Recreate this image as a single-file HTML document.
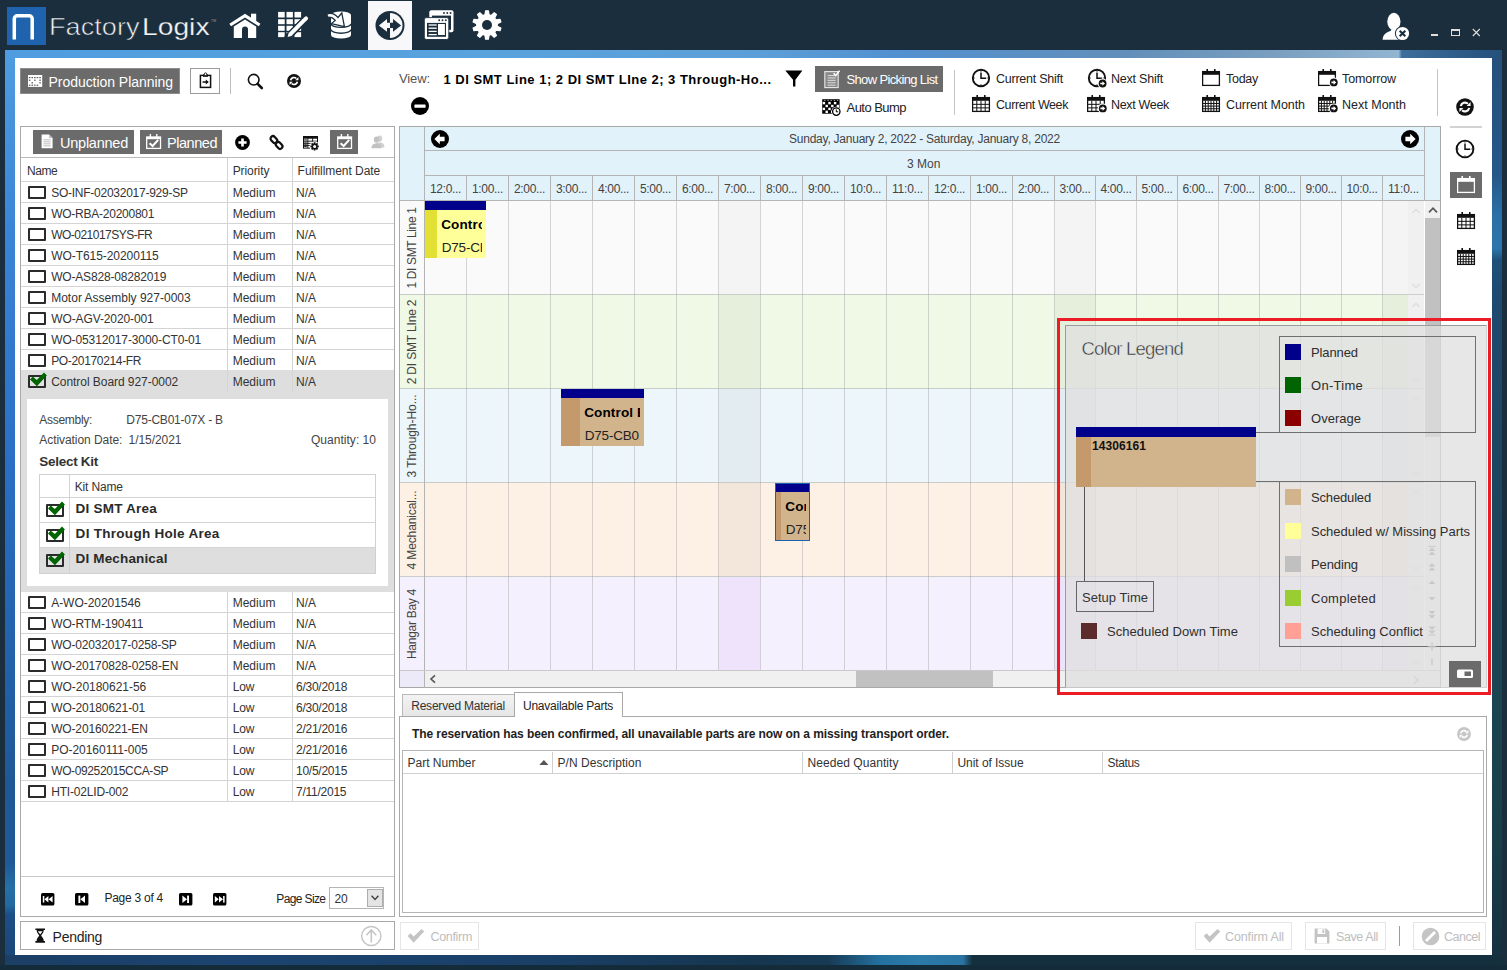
<!DOCTYPE html>
<html><head><meta charset="utf-8"><title>FactoryLogix</title>
<style>
html,body{margin:0;padding:0;}
body{width:1507px;height:970px;position:relative;overflow:hidden;background:#1b2e3d;font-family:"Liberation Sans",sans-serif;}
div,span,svg{position:absolute;}
span{white-space:nowrap;display:block;}
</style></head><body>
<div style="left:5px;top:50px;width:1497px;height:915px;background:linear-gradient(90deg,rgba(27,46,61,0) 0%,rgba(27,46,61,0) 55%,rgba(27,46,61,.0) 100%),linear-gradient(180deg,#4f9de0 0%,#3a84d6 20%,#2a6fc4 45%,#2160a6 70%,#1f5896 80%,#1f5a98 89%,#2670a8 91.5%,#2468a0 93.5%,#1c4e86 94.5%,#1b4676 100%);"></div>
<div style="left:5px;top:50px;width:1497px;height:8px;background:linear-gradient(90deg,#4f9de0 0%,#58a3de 30%,#5c9fd8 50%,#5290d0 60%,#628fba 75%,#7a9fc0 85%,#92b5d2 93.1%,#3e6e9c 93.3%,#24507a 100%);"></div>
<div style="left:1492px;top:58px;width:10px;height:907px;background:linear-gradient(180deg,#26507b 0%,#25588a 13%,#2a70a6 17.3%,#2b76ac 21%,#20507a 22.3%,#1e4a70 26%,#1c4560 45%,#1b4552 70%,#19404a 85%,#15303f 100%);"></div>
<div style="left:5px;top:955px;width:1497px;height:10px;background:linear-gradient(90deg,#1b3f66 0%,#1c4470 15%,#1a4068 35%,#16364f 50%,#173a55 55%,#2472a0 58.5%,#2b7aa8 61%,#2a74a2 64%,#14303f 64.6%,#14303f 100%);"></div>
<div style="left:0px;top:965px;width:1507px;height:5px;background:#142b39;"></div>
<div style="left:15px;top:58px;width:1477px;height:897px;background:#fff;"></div>
<div style="left:0px;top:0px;width:1507px;height:50px;background:#1b2e3d;"></div>
<div style="left:7px;top:7px;width:39px;height:38px;background:#1f62ad;"></div>
<svg style="left:7px;top:7px;" width="39" height="38" viewBox="0 0 39 38"><path d="M7.3 32.6 V11.8 a3 3 0 0 1 3 -3 H22.2 a3 3 0 0 1 3 3 V32.6" fill="none" stroke="#fff" stroke-width="3.5"/></svg>
<span style="left:49.2px;top:12.08px;font-size:24px;line-height:30px;color:#f0f2f4;transform-origin:0 0;transform:scaleX(1.1310);-webkit-text-stroke:0.6px #1b2e3d;">Factory</span>
<span style="left:142.4px;top:12.08px;font-size:24px;line-height:30px;color:#f4f5f6;transform-origin:0 0;transform:scaleX(1.1765);-webkit-text-stroke:0.25px #1b2e3d;">Logix</span>
<span style="left:211.00px;top:18.00px;font-size:3.5px;line-height:6px;letter-spacing:0.000px;color:#8d99a3;">TM</span>
<div style="left:20px;top:68px;width:160px;height:26px;background:#6b6b6b;border:1px solid #8c8c8c;box-sizing:border-box;"></div>
<span style="left:48.50px;top:73.00px;font-size:14px;line-height:18px;letter-spacing:-0.043px;color:#fff;">Production Planning</span>
<div style="left:190px;top:68px;width:30px;height:26px;background:#fff;border:1px solid #9a9a9a;box-sizing:border-box;"></div>
<div style="left:230px;top:68px;width:1px;height:26px;background:#bdbdbd;"></div>
<span style="left:399.00px;top:70.00px;font-size:13px;line-height:17px;letter-spacing:-0.111px;color:#555;">View:</span>
<span style="left:443.50px;top:71.00px;font-size:13px;line-height:17px;letter-spacing:0.488px;color:#000;font-weight:bold;">1 DI SMT Line 1; 2 DI SMT LIne 2; 3 Through-Ho...</span>
<div style="left:815px;top:66px;width:128px;height:26px;background:#6b6b6b;"></div>
<span style="left:846.50px;top:71.00px;font-size:13px;line-height:17px;letter-spacing:-0.640px;color:#fff;">Show Picking List</span>
<span style="left:846.50px;top:99.00px;font-size:13px;line-height:17px;letter-spacing:-0.535px;color:#222;">Auto Bump</span>
<div style="left:954px;top:70px;width:1px;height:45px;background:#c4c4c4;"></div>
<span style="left:996.00px;top:71.00px;font-size:12.5px;line-height:16px;letter-spacing:-0.244px;color:#222;">Current Shift</span>
<span style="left:996.00px;top:97.00px;font-size:12.5px;line-height:16px;letter-spacing:-0.407px;color:#222;">Current Week</span>
<span style="left:1111.00px;top:71.00px;font-size:12.5px;line-height:16px;letter-spacing:-0.219px;color:#222;">Next Shift</span>
<span style="left:1111.00px;top:97.00px;font-size:12.5px;line-height:16px;letter-spacing:-0.322px;color:#222;">Next Week</span>
<span style="left:1226.00px;top:71.00px;font-size:12.5px;line-height:16px;letter-spacing:-0.271px;color:#222;">Today</span>
<span style="left:1226.00px;top:97.00px;font-size:12.5px;line-height:16px;letter-spacing:-0.069px;color:#222;">Current Month</span>
<span style="left:1342.00px;top:71.00px;font-size:12.5px;line-height:16px;letter-spacing:-0.109px;color:#222;">Tomorrow</span>
<span style="left:1342.00px;top:97.00px;font-size:12.5px;line-height:16px;letter-spacing:0.008px;color:#222;">Next Month</span>
<div style="left:1437px;top:69px;width:1px;height:47px;background:#c4c4c4;"></div>
<div style="left:1450px;top:126px;width:32px;height:1.5px;background:#d2d2d2;"></div>
<div style="left:1450px;top:172px;width:32px;height:26px;background:#6b6b6b;"></div>
<div style="left:20px;top:126px;width:375px;height:791px;background:#fff;border:1px solid #a9a9a9;box-sizing:border-box;"></div>
<div style="left:33px;top:130px;width:101px;height:24px;background:#6b6b6b;"></div>
<span style="left:60.00px;top:134.00px;font-size:14.5px;line-height:18px;letter-spacing:-0.238px;color:#fff;">Unplanned</span>
<div style="left:139.5px;top:130px;width:82.5px;height:24px;background:#6b6b6b;"></div>
<span style="left:167.00px;top:134.00px;font-size:14.5px;line-height:18px;letter-spacing:-0.459px;color:#fff;">Planned</span>
<div style="left:330px;top:130px;width:28px;height:24px;background:#6b6b6b;"></div>
<div style="left:21px;top:157px;width:373px;height:1px;background:#bcbcbc;"></div>
<div style="left:21px;top:181px;width:373px;height:1px;background:#d4d4d4;"></div>
<span style="left:26.90px;top:163.00px;font-size:12px;line-height:16px;letter-spacing:-0.427px;color:#333;">Name</span>
<span style="left:232.70px;top:163.00px;font-size:12px;line-height:16px;letter-spacing:-0.080px;color:#333;">Priority</span>
<span style="left:297.60px;top:163.00px;font-size:12px;line-height:16px;letter-spacing:-0.048px;color:#333;">Fulfillment Date</span>
<div style="left:21px;top:202px;width:373px;height:1px;background:#d4d4d4;"></div>
<div style="left:28px;top:185.5px;width:18px;height:13px;background:#fff;border:2px solid #2b2b2b;box-sizing:border-box;border-radius:1px;"></div>
<span style="left:51.20px;top:185.00px;font-size:12px;line-height:16px;letter-spacing:-0.253px;color:#333;">SO-INF-02032017-929-SP</span>
<span style="left:232.70px;top:185.00px;font-size:12px;line-height:16px;letter-spacing:0.003px;color:#333;">Medium</span>
<span style="left:296.00px;top:185.00px;font-size:12px;line-height:16px;letter-spacing:-0.001px;color:#333;">N/A</span>
<div style="left:21px;top:223px;width:373px;height:1px;background:#d4d4d4;"></div>
<div style="left:28px;top:206.5px;width:18px;height:13px;background:#fff;border:2px solid #2b2b2b;box-sizing:border-box;border-radius:1px;"></div>
<span style="left:51.20px;top:206.00px;font-size:12px;line-height:16px;letter-spacing:-0.248px;color:#333;">WO-RBA-20200801</span>
<span style="left:232.70px;top:206.00px;font-size:12px;line-height:16px;letter-spacing:0.003px;color:#333;">Medium</span>
<span style="left:296.00px;top:206.00px;font-size:12px;line-height:16px;letter-spacing:-0.001px;color:#333;">N/A</span>
<div style="left:21px;top:244px;width:373px;height:1px;background:#d4d4d4;"></div>
<div style="left:28px;top:227.5px;width:18px;height:13px;background:#fff;border:2px solid #2b2b2b;box-sizing:border-box;border-radius:1px;"></div>
<span style="left:51.20px;top:227.00px;font-size:12px;line-height:16px;letter-spacing:-0.514px;color:#333;">WO-021017SYS-FR</span>
<span style="left:232.70px;top:227.00px;font-size:12px;line-height:16px;letter-spacing:0.003px;color:#333;">Medium</span>
<span style="left:296.00px;top:227.00px;font-size:12px;line-height:16px;letter-spacing:-0.001px;color:#333;">N/A</span>
<div style="left:21px;top:265px;width:373px;height:1px;background:#d4d4d4;"></div>
<div style="left:28px;top:248.5px;width:18px;height:13px;background:#fff;border:2px solid #2b2b2b;box-sizing:border-box;border-radius:1px;"></div>
<span style="left:51.20px;top:248.00px;font-size:12px;line-height:16px;letter-spacing:-0.063px;color:#333;">WO-T615-20200115</span>
<span style="left:232.70px;top:248.00px;font-size:12px;line-height:16px;letter-spacing:0.003px;color:#333;">Medium</span>
<span style="left:296.00px;top:248.00px;font-size:12px;line-height:16px;letter-spacing:-0.001px;color:#333;">N/A</span>
<div style="left:21px;top:286px;width:373px;height:1px;background:#d4d4d4;"></div>
<div style="left:28px;top:269.5px;width:18px;height:13px;background:#fff;border:2px solid #2b2b2b;box-sizing:border-box;border-radius:1px;"></div>
<span style="left:51.20px;top:269.00px;font-size:12px;line-height:16px;letter-spacing:-0.181px;color:#333;">WO-AS828-08282019</span>
<span style="left:232.70px;top:269.00px;font-size:12px;line-height:16px;letter-spacing:0.003px;color:#333;">Medium</span>
<span style="left:296.00px;top:269.00px;font-size:12px;line-height:16px;letter-spacing:-0.001px;color:#333;">N/A</span>
<div style="left:21px;top:307px;width:373px;height:1px;background:#d4d4d4;"></div>
<div style="left:28px;top:290.5px;width:18px;height:13px;background:#fff;border:2px solid #2b2b2b;box-sizing:border-box;border-radius:1px;"></div>
<span style="left:51.20px;top:290.00px;font-size:12px;line-height:16px;letter-spacing:0.004px;color:#333;">Motor Assembly 927-0003</span>
<span style="left:232.70px;top:290.00px;font-size:12px;line-height:16px;letter-spacing:0.003px;color:#333;">Medium</span>
<span style="left:296.00px;top:290.00px;font-size:12px;line-height:16px;letter-spacing:-0.001px;color:#333;">N/A</span>
<div style="left:21px;top:328px;width:373px;height:1px;background:#d4d4d4;"></div>
<div style="left:28px;top:311.5px;width:18px;height:13px;background:#fff;border:2px solid #2b2b2b;box-sizing:border-box;border-radius:1px;"></div>
<span style="left:51.20px;top:311.00px;font-size:12px;line-height:16px;letter-spacing:-0.103px;color:#333;">WO-AGV-2020-001</span>
<span style="left:232.70px;top:311.00px;font-size:12px;line-height:16px;letter-spacing:0.003px;color:#333;">Medium</span>
<span style="left:296.00px;top:311.00px;font-size:12px;line-height:16px;letter-spacing:-0.001px;color:#333;">N/A</span>
<div style="left:21px;top:349px;width:373px;height:1px;background:#d4d4d4;"></div>
<div style="left:28px;top:332.5px;width:18px;height:13px;background:#fff;border:2px solid #2b2b2b;box-sizing:border-box;border-radius:1px;"></div>
<span style="left:51.20px;top:332.00px;font-size:12px;line-height:16px;letter-spacing:-0.120px;color:#333;">WO-05312017-3000-CT0-01</span>
<span style="left:232.70px;top:332.00px;font-size:12px;line-height:16px;letter-spacing:0.003px;color:#333;">Medium</span>
<span style="left:296.00px;top:332.00px;font-size:12px;line-height:16px;letter-spacing:-0.001px;color:#333;">N/A</span>
<div style="left:21px;top:370px;width:373px;height:1px;background:#d4d4d4;"></div>
<div style="left:28px;top:353.5px;width:18px;height:13px;background:#fff;border:2px solid #2b2b2b;box-sizing:border-box;border-radius:1px;"></div>
<span style="left:51.20px;top:353.00px;font-size:12px;line-height:16px;letter-spacing:-0.337px;color:#333;">PO-20170214-FR</span>
<span style="left:232.70px;top:353.00px;font-size:12px;line-height:16px;letter-spacing:0.003px;color:#333;">Medium</span>
<span style="left:296.00px;top:353.00px;font-size:12px;line-height:16px;letter-spacing:-0.001px;color:#333;">N/A</span>
<div style="left:21px;top:370px;width:373px;height:21px;background:#dedede;"></div>
<div style="left:21px;top:391px;width:373px;height:1px;background:#d4d4d4;"></div>
<div style="left:28px;top:374.5px;width:18px;height:13px;background:#e2e2e2;border:2px solid #2b2b2b;box-sizing:border-box;border-radius:1px;"></div>
<svg style="left:27px;top:369.5px;" width="22" height="20" viewBox="0 0 22 20"><path d="M3 9.4 L5.7 6.5 L9.8 9.9 L17 2.4 L19.9 5.5 L9.9 16.2 Z" fill="#006400"/></svg>
<span style="left:51.20px;top:374.00px;font-size:12px;line-height:16px;letter-spacing:-0.049px;color:#333;">Control Board 927-0002</span>
<span style="left:232.70px;top:374.00px;font-size:12px;line-height:16px;letter-spacing:0.003px;color:#333;">Medium</span>
<span style="left:296.00px;top:374.00px;font-size:12px;line-height:16px;letter-spacing:-0.001px;color:#333;">N/A</span>
<div style="left:21px;top:391px;width:373px;height:200.5px;background:#dedede;"></div>
<div style="left:27px;top:399px;width:361px;height:186.5px;background:#fff;"></div>
<span style="left:39.30px;top:412.00px;font-size:12px;line-height:16px;letter-spacing:-0.283px;color:#444;">Assembly:</span>
<span style="left:126.30px;top:412.00px;font-size:12px;line-height:16px;letter-spacing:-0.221px;color:#444;">D75-CB01-07X - B</span>
<span style="left:39.30px;top:432.00px;font-size:12px;line-height:16px;letter-spacing:-0.065px;color:#444;">Activation Date:</span>
<span style="left:128.50px;top:432.00px;font-size:12px;line-height:16px;letter-spacing:-0.043px;color:#444;">1/15/2021</span>
<span style="left:311.00px;top:432.00px;font-size:12px;line-height:16px;letter-spacing:0.025px;color:#444;">Quantity: 10</span>
<span style="left:39.30px;top:453.00px;font-size:13.5px;line-height:17px;letter-spacing:-0.282px;color:#333;font-weight:bold;">Select Kit</span>
<div style="left:39px;top:474px;width:337px;height:100px;background:#fff;border:1px solid #d0d0d0;box-sizing:border-box;"></div>
<div style="left:69px;top:475px;width:1px;height:98px;background:#d4d4d4;"></div>
<div style="left:40px;top:497px;width:335px;height:1px;background:#d4d4d4;"></div>
<div style="left:40px;top:522px;width:335px;height:1px;background:#d4d4d4;"></div>
<div style="left:40px;top:547px;width:335px;height:1px;background:#d4d4d4;"></div>
<div style="left:40px;top:548px;width:335px;height:25px;background:#dedede;"></div>
<div style="left:69px;top:548px;width:1px;height:25px;background:#d0d0d0;"></div>
<span style="left:74.70px;top:479.00px;font-size:12px;line-height:16px;letter-spacing:-0.143px;color:#333;">Kit Name</span>
<div style="left:45.5px;top:503.5px;width:18px;height:13px;background:#fff;border:2px solid #2b2b2b;box-sizing:border-box;border-radius:1px;"></div>
<svg style="left:44.5px;top:498.5px;" width="22" height="20" viewBox="0 0 22 20"><path d="M3 9.4 L5.7 6.5 L9.8 9.9 L17 2.4 L19.9 5.5 L9.9 16.2 Z" fill="#006400"/></svg>
<span style="left:75.60px;top:500.00px;font-size:13.5px;line-height:17px;letter-spacing:0.217px;color:#2a2a2a;font-weight:bold;">DI SMT Area</span>
<div style="left:45.5px;top:528.5px;width:18px;height:13px;background:#fff;border:2px solid #2b2b2b;box-sizing:border-box;border-radius:1px;"></div>
<svg style="left:44.5px;top:523.5px;" width="22" height="20" viewBox="0 0 22 20"><path d="M3 9.4 L5.7 6.5 L9.8 9.9 L17 2.4 L19.9 5.5 L9.9 16.2 Z" fill="#006400"/></svg>
<span style="left:75.60px;top:525.00px;font-size:13.5px;line-height:17px;letter-spacing:0.287px;color:#2a2a2a;font-weight:bold;">DI Through Hole Area</span>
<div style="left:45.5px;top:553.5px;width:18px;height:13px;background:#e2e2e2;border:2px solid #2b2b2b;box-sizing:border-box;border-radius:1px;"></div>
<svg style="left:44.5px;top:548.5px;" width="22" height="20" viewBox="0 0 22 20"><path d="M3 9.4 L5.7 6.5 L9.8 9.9 L17 2.4 L19.9 5.5 L9.9 16.2 Z" fill="#006400"/></svg>
<span style="left:75.60px;top:550.00px;font-size:13.5px;line-height:17px;letter-spacing:0.151px;color:#2a2a2a;font-weight:bold;">DI Mechanical</span>
<div style="left:21px;top:612px;width:373px;height:1px;background:#d4d4d4;"></div>
<div style="left:28px;top:595.5px;width:18px;height:13px;background:#fff;border:2px solid #2b2b2b;box-sizing:border-box;border-radius:1px;"></div>
<span style="left:51.20px;top:595.00px;font-size:12px;line-height:16px;letter-spacing:-0.042px;color:#333;">A-WO-20201546</span>
<span style="left:232.70px;top:595.00px;font-size:12px;line-height:16px;letter-spacing:0.003px;color:#333;">Medium</span>
<span style="left:296.00px;top:595.00px;font-size:12px;line-height:16px;letter-spacing:-0.001px;color:#333;">N/A</span>
<div style="left:21px;top:633px;width:373px;height:1px;background:#d4d4d4;"></div>
<div style="left:28px;top:616.5px;width:18px;height:13px;background:#fff;border:2px solid #2b2b2b;box-sizing:border-box;border-radius:1px;"></div>
<span style="left:51.20px;top:616.00px;font-size:12px;line-height:16px;letter-spacing:-0.122px;color:#333;">WO-RTM-190411</span>
<span style="left:232.70px;top:616.00px;font-size:12px;line-height:16px;letter-spacing:0.003px;color:#333;">Medium</span>
<span style="left:296.00px;top:616.00px;font-size:12px;line-height:16px;letter-spacing:-0.001px;color:#333;">N/A</span>
<div style="left:21px;top:654px;width:373px;height:1px;background:#d4d4d4;"></div>
<div style="left:28px;top:637.5px;width:18px;height:13px;background:#fff;border:2px solid #2b2b2b;box-sizing:border-box;border-radius:1px;"></div>
<span style="left:51.20px;top:637.00px;font-size:12px;line-height:16px;letter-spacing:-0.171px;color:#333;">WO-02032017-0258-SP</span>
<span style="left:232.70px;top:637.00px;font-size:12px;line-height:16px;letter-spacing:0.003px;color:#333;">Medium</span>
<span style="left:296.00px;top:637.00px;font-size:12px;line-height:16px;letter-spacing:-0.001px;color:#333;">N/A</span>
<div style="left:21px;top:675px;width:373px;height:1px;background:#d4d4d4;"></div>
<div style="left:28px;top:658.5px;width:18px;height:13px;background:#fff;border:2px solid #2b2b2b;box-sizing:border-box;border-radius:1px;"></div>
<span style="left:51.20px;top:658.00px;font-size:12px;line-height:16px;letter-spacing:-0.127px;color:#333;">WO-20170828-0258-EN</span>
<span style="left:232.70px;top:658.00px;font-size:12px;line-height:16px;letter-spacing:0.003px;color:#333;">Medium</span>
<span style="left:296.00px;top:658.00px;font-size:12px;line-height:16px;letter-spacing:-0.001px;color:#333;">N/A</span>
<div style="left:21px;top:696px;width:373px;height:1px;background:#d4d4d4;"></div>
<div style="left:28px;top:679.5px;width:18px;height:13px;background:#fff;border:2px solid #2b2b2b;box-sizing:border-box;border-radius:1px;"></div>
<span style="left:51.20px;top:679.00px;font-size:12px;line-height:16px;letter-spacing:-0.028px;color:#333;">WO-20180621-56</span>
<span style="left:232.70px;top:679.00px;font-size:12px;line-height:16px;letter-spacing:-0.171px;color:#333;">Low</span>
<span style="left:296.00px;top:679.00px;font-size:12px;line-height:16px;letter-spacing:-0.255px;color:#333;">6/30/2018</span>
<div style="left:21px;top:717px;width:373px;height:1px;background:#d4d4d4;"></div>
<div style="left:28px;top:700.5px;width:18px;height:13px;background:#fff;border:2px solid #2b2b2b;box-sizing:border-box;border-radius:1px;"></div>
<span style="left:51.20px;top:700.00px;font-size:12px;line-height:16px;letter-spacing:-0.099px;color:#333;">WO-20180621-01</span>
<span style="left:232.70px;top:700.00px;font-size:12px;line-height:16px;letter-spacing:-0.171px;color:#333;">Low</span>
<span style="left:296.00px;top:700.00px;font-size:12px;line-height:16px;letter-spacing:-0.255px;color:#333;">6/30/2018</span>
<div style="left:21px;top:738px;width:373px;height:1px;background:#d4d4d4;"></div>
<div style="left:28px;top:721.5px;width:18px;height:13px;background:#fff;border:2px solid #2b2b2b;box-sizing:border-box;border-radius:1px;"></div>
<span style="left:51.20px;top:721.00px;font-size:12px;line-height:16px;letter-spacing:-0.158px;color:#333;">WO-20160221-EN</span>
<span style="left:232.70px;top:721.00px;font-size:12px;line-height:16px;letter-spacing:-0.171px;color:#333;">Low</span>
<span style="left:296.00px;top:721.00px;font-size:12px;line-height:16px;letter-spacing:-0.255px;color:#333;">2/21/2016</span>
<div style="left:21px;top:759px;width:373px;height:1px;background:#d4d4d4;"></div>
<div style="left:28px;top:742.5px;width:18px;height:13px;background:#fff;border:2px solid #2b2b2b;box-sizing:border-box;border-radius:1px;"></div>
<span style="left:51.20px;top:742.00px;font-size:12px;line-height:16px;letter-spacing:-0.031px;color:#333;">PO-20160111-005</span>
<span style="left:232.70px;top:742.00px;font-size:12px;line-height:16px;letter-spacing:-0.171px;color:#333;">Low</span>
<span style="left:296.00px;top:742.00px;font-size:12px;line-height:16px;letter-spacing:-0.255px;color:#333;">2/21/2016</span>
<div style="left:21px;top:780px;width:373px;height:1px;background:#d4d4d4;"></div>
<div style="left:28px;top:763.5px;width:18px;height:13px;background:#fff;border:2px solid #2b2b2b;box-sizing:border-box;border-radius:1px;"></div>
<span style="left:51.20px;top:763.00px;font-size:12px;line-height:16px;letter-spacing:-0.376px;color:#333;">WO-09252015CCA-SP</span>
<span style="left:232.70px;top:763.00px;font-size:12px;line-height:16px;letter-spacing:-0.171px;color:#333;">Low</span>
<span style="left:296.00px;top:763.00px;font-size:12px;line-height:16px;letter-spacing:-0.255px;color:#333;">10/5/2015</span>
<div style="left:21px;top:801px;width:373px;height:1px;background:#d4d4d4;"></div>
<div style="left:28px;top:784.5px;width:18px;height:13px;background:#fff;border:2px solid #2b2b2b;box-sizing:border-box;border-radius:1px;"></div>
<span style="left:51.20px;top:784.00px;font-size:12px;line-height:16px;letter-spacing:-0.182px;color:#333;">HTI-02LID-002</span>
<span style="left:232.70px;top:784.00px;font-size:12px;line-height:16px;letter-spacing:-0.171px;color:#333;">Low</span>
<span style="left:296.00px;top:784.00px;font-size:12px;line-height:16px;letter-spacing:-0.251px;color:#333;">7/11/2015</span>
<div style="left:227px;top:158px;width:1px;height:233px;background:#d4d4d4;"></div>
<div style="left:292px;top:158px;width:1px;height:233px;background:#d4d4d4;"></div>
<div style="left:227px;top:592px;width:1px;height:210px;background:#d4d4d4;"></div>
<div style="left:292px;top:592px;width:1px;height:210px;background:#d4d4d4;"></div>
<div style="left:21px;top:876px;width:373px;height:1px;background:#c8c8c8;"></div>
<span style="left:104.40px;top:890.00px;font-size:12px;line-height:16px;letter-spacing:-0.253px;color:#222;">Page 3 of 4</span>
<span style="left:276.30px;top:891.00px;font-size:12px;line-height:16px;letter-spacing:-0.623px;color:#222;">Page Size</span>
<div style="left:329px;top:887px;width:55px;height:22px;background:#fff;border:1px solid #b5b5b5;box-sizing:border-box;"></div>
<span style="left:334.50px;top:891.00px;font-size:12px;line-height:16px;letter-spacing:-0.174px;color:#333;">20</span>
<div style="left:367px;top:889px;width:16px;height:18px;background:#e4e4e4;border:1px solid #adadad;box-sizing:border-box;"></div>
<div style="left:20px;top:921px;width:375px;height:29px;background:#fff;border:1px solid #a9a9a9;box-sizing:border-box;"></div>
<span style="left:52.60px;top:928.00px;font-size:14px;line-height:18px;letter-spacing:-0.283px;color:#222;">Pending</span>
<div style="left:399px;top:126px;width:1042px;height:562px;background:#fff;border:1px solid #a9a9a9;box-sizing:border-box;"></div>
<div style="left:400px;top:127px;width:1040px;height:74px;background:#e2f2fb;"></div>
<div style="left:424px;top:127px;width:1px;height:74px;background:#b4b4b4;"></div>
<div style="left:425px;top:150px;width:1000px;height:1px;background:#b4b4b4;"></div>
<div style="left:425px;top:175px;width:1000px;height:1px;background:#b4b4b4;"></div>
<div style="left:400px;top:200px;width:1040px;height:1px;background:#b4b4b4;"></div>
<div style="left:1424px;top:127px;width:1px;height:74px;background:#b4b4b4;"></div>
<span style="left:789.00px;top:131.00px;font-size:12px;line-height:16px;letter-spacing:-0.237px;color:#444;">Sunday, January 2, 2022 - Saturday, January 8, 2022</span>
<span style="left:906.95px;top:156.00px;font-size:12px;line-height:16px;letter-spacing:0.030px;color:#444;">3 Mon</span>
<div style="left:400px;top:201px;width:24px;height:93px;background:#fafafa;"></div>
<div style="left:425px;top:201px;width:999px;height:93px;background:#fafafa;"></div>
<div style="left:719px;top:201px;width:41px;height:93px;background:#f4f4f4;"></div>
<div style="left:1055px;top:201px;width:40px;height:93px;background:#f4f4f4;"></div>
<div style="left:1383px;top:201px;width:41px;height:93px;background:#f4f4f4;"></div>
<div style="left:400px;top:294px;width:1024px;height:1px;background:#c9cdc9;"></div>
<span style="left:352px;top:239.5px;width:120px;height:16px;line-height:16px;text-align:center;font-size:12px;letter-spacing:-0.366px;color:#444;transform:rotate(-90deg);">1 DI SMT Line 1</span>
<div style="left:400px;top:295px;width:24px;height:93px;background:#f0f8e6;"></div>
<div style="left:425px;top:295px;width:999px;height:93px;background:#f0f8e6;"></div>
<div style="left:719px;top:295px;width:41px;height:93px;background:#e6eedc;"></div>
<div style="left:1055px;top:295px;width:40px;height:93px;background:#e6eedc;"></div>
<div style="left:1383px;top:295px;width:41px;height:93px;background:#e6eedc;"></div>
<div style="left:400px;top:388px;width:1024px;height:1px;background:#c9cdc9;"></div>
<span style="left:352px;top:333.5px;width:120px;height:16px;line-height:16px;text-align:center;font-size:12px;letter-spacing:-0.164px;color:#444;transform:rotate(-90deg);">2 DI SMT LIne 2</span>
<div style="left:400px;top:389px;width:24px;height:93px;background:#edf6fa;"></div>
<div style="left:425px;top:389px;width:999px;height:93px;background:#edf6fa;"></div>
<div style="left:719px;top:389px;width:41px;height:93px;background:#e3ecf0;"></div>
<div style="left:1055px;top:389px;width:40px;height:93px;background:#e3ecf0;"></div>
<div style="left:1383px;top:389px;width:41px;height:93px;background:#e3ecf0;"></div>
<div style="left:400px;top:482px;width:1024px;height:1px;background:#c9cdc9;"></div>
<span style="left:352px;top:427.5px;width:120px;height:16px;line-height:16px;text-align:center;font-size:12px;letter-spacing:-0.055px;color:#444;transform:rotate(-90deg);">3 Through-Ho...</span>
<div style="left:400px;top:483px;width:24px;height:93px;background:#fdf1e6;"></div>
<div style="left:425px;top:483px;width:999px;height:93px;background:#fdf1e6;"></div>
<div style="left:719px;top:483px;width:41px;height:93px;background:#f3e7dc;"></div>
<div style="left:1055px;top:483px;width:40px;height:93px;background:#f3e7dc;"></div>
<div style="left:1383px;top:483px;width:41px;height:93px;background:#f3e7dc;"></div>
<div style="left:400px;top:576px;width:1024px;height:1px;background:#c9cdc9;"></div>
<span style="left:352px;top:521.5px;width:120px;height:16px;line-height:16px;text-align:center;font-size:12px;letter-spacing:-0.114px;color:#444;transform:rotate(-90deg);">4 Mechanical...</span>
<div style="left:400px;top:577px;width:24px;height:93px;background:#f5f0fe;"></div>
<div style="left:425px;top:577px;width:999px;height:93px;background:#f5f0fe;"></div>
<div style="left:719px;top:577px;width:41px;height:93px;background:#efe2fb;"></div>
<div style="left:1055px;top:577px;width:40px;height:93px;background:#efe2fb;"></div>
<div style="left:1383px;top:577px;width:41px;height:93px;background:#efe2fb;"></div>
<div style="left:400px;top:670px;width:1024px;height:1px;background:#c9cdc9;"></div>
<span style="left:352px;top:615.5px;width:120px;height:16px;line-height:16px;text-align:center;font-size:12px;letter-spacing:-0.281px;color:#444;transform:rotate(-90deg);">Hangar Bay 4</span>
<span style="left:430.00px;top:181.00px;font-size:12px;line-height:16px;letter-spacing:-0.337px;color:#444;">12:0...</span>
<div style="left:466px;top:176px;width:1px;height:24px;background:#b4b4b4;"></div>
<div style="left:466px;top:201px;width:1px;height:469px;background:rgba(150,150,150,.38);"></div>
<span style="left:472.00px;top:181.00px;font-size:12px;line-height:16px;letter-spacing:-0.337px;color:#444;">1:00...</span>
<div style="left:508px;top:176px;width:1px;height:24px;background:#b4b4b4;"></div>
<div style="left:508px;top:201px;width:1px;height:469px;background:rgba(150,150,150,.38);"></div>
<span style="left:514.00px;top:181.00px;font-size:12px;line-height:16px;letter-spacing:-0.337px;color:#444;">2:00...</span>
<div style="left:550px;top:176px;width:1px;height:24px;background:#b4b4b4;"></div>
<div style="left:550px;top:201px;width:1px;height:469px;background:rgba(150,150,150,.38);"></div>
<span style="left:556.00px;top:181.00px;font-size:12px;line-height:16px;letter-spacing:-0.337px;color:#444;">3:00...</span>
<div style="left:592px;top:176px;width:1px;height:24px;background:#b4b4b4;"></div>
<div style="left:592px;top:201px;width:1px;height:469px;background:rgba(150,150,150,.38);"></div>
<span style="left:598.00px;top:181.00px;font-size:12px;line-height:16px;letter-spacing:-0.337px;color:#444;">4:00...</span>
<div style="left:634px;top:176px;width:1px;height:24px;background:#b4b4b4;"></div>
<div style="left:634px;top:201px;width:1px;height:469px;background:rgba(150,150,150,.38);"></div>
<span style="left:640.00px;top:181.00px;font-size:12px;line-height:16px;letter-spacing:-0.337px;color:#444;">5:00...</span>
<div style="left:676px;top:176px;width:1px;height:24px;background:#b4b4b4;"></div>
<div style="left:676px;top:201px;width:1px;height:469px;background:rgba(150,150,150,.38);"></div>
<span style="left:682.00px;top:181.00px;font-size:12px;line-height:16px;letter-spacing:-0.337px;color:#444;">6:00...</span>
<div style="left:718px;top:176px;width:1px;height:24px;background:#b4b4b4;"></div>
<div style="left:718px;top:201px;width:1px;height:469px;background:rgba(150,150,150,.38);"></div>
<span style="left:724.00px;top:181.00px;font-size:12px;line-height:16px;letter-spacing:-0.337px;color:#444;">7:00...</span>
<div style="left:760px;top:176px;width:1px;height:24px;background:#b4b4b4;"></div>
<div style="left:760px;top:201px;width:1px;height:469px;background:rgba(150,150,150,.38);"></div>
<span style="left:766.00px;top:181.00px;font-size:12px;line-height:16px;letter-spacing:-0.337px;color:#444;">8:00...</span>
<div style="left:802px;top:176px;width:1px;height:24px;background:#b4b4b4;"></div>
<div style="left:802px;top:201px;width:1px;height:469px;background:rgba(150,150,150,.38);"></div>
<span style="left:808.00px;top:181.00px;font-size:12px;line-height:16px;letter-spacing:-0.337px;color:#444;">9:00...</span>
<div style="left:844px;top:176px;width:1px;height:24px;background:#b4b4b4;"></div>
<div style="left:844px;top:201px;width:1px;height:469px;background:rgba(150,150,150,.38);"></div>
<span style="left:850.00px;top:181.00px;font-size:12px;line-height:16px;letter-spacing:-0.337px;color:#444;">10:0...</span>
<div style="left:886px;top:176px;width:1px;height:24px;background:#b4b4b4;"></div>
<div style="left:886px;top:201px;width:1px;height:469px;background:rgba(150,150,150,.38);"></div>
<span style="left:892.00px;top:181.00px;font-size:12px;line-height:16px;letter-spacing:-0.210px;color:#444;">11:0...</span>
<div style="left:928px;top:176px;width:1px;height:24px;background:#b4b4b4;"></div>
<div style="left:928px;top:201px;width:1px;height:469px;background:rgba(150,150,150,.38);"></div>
<span style="left:934.00px;top:181.00px;font-size:12px;line-height:16px;letter-spacing:-0.337px;color:#444;">12:0...</span>
<div style="left:970px;top:176px;width:1px;height:24px;background:#b4b4b4;"></div>
<div style="left:970px;top:201px;width:1px;height:469px;background:rgba(150,150,150,.38);"></div>
<span style="left:976.00px;top:181.00px;font-size:12px;line-height:16px;letter-spacing:-0.337px;color:#444;">1:00...</span>
<div style="left:1012px;top:176px;width:1px;height:24px;background:#b4b4b4;"></div>
<div style="left:1012px;top:201px;width:1px;height:469px;background:rgba(150,150,150,.38);"></div>
<span style="left:1018.00px;top:181.00px;font-size:12px;line-height:16px;letter-spacing:-0.337px;color:#444;">2:00...</span>
<div style="left:1054px;top:176px;width:1px;height:24px;background:#b4b4b4;"></div>
<div style="left:1054px;top:201px;width:1px;height:469px;background:rgba(150,150,150,.38);"></div>
<span style="left:1059.50px;top:181.00px;font-size:12px;line-height:16px;letter-spacing:-0.337px;color:#444;">3:00...</span>
<div style="left:1095px;top:176px;width:1px;height:24px;background:#b4b4b4;"></div>
<div style="left:1095px;top:201px;width:1px;height:469px;background:rgba(150,150,150,.38);"></div>
<span style="left:1100.50px;top:181.00px;font-size:12px;line-height:16px;letter-spacing:-0.337px;color:#444;">4:00...</span>
<div style="left:1136px;top:176px;width:1px;height:24px;background:#b4b4b4;"></div>
<div style="left:1136px;top:201px;width:1px;height:469px;background:rgba(150,150,150,.38);"></div>
<span style="left:1141.50px;top:181.00px;font-size:12px;line-height:16px;letter-spacing:-0.337px;color:#444;">5:00...</span>
<div style="left:1177px;top:176px;width:1px;height:24px;background:#b4b4b4;"></div>
<div style="left:1177px;top:201px;width:1px;height:469px;background:rgba(150,150,150,.38);"></div>
<span style="left:1182.50px;top:181.00px;font-size:12px;line-height:16px;letter-spacing:-0.337px;color:#444;">6:00...</span>
<div style="left:1218px;top:176px;width:1px;height:24px;background:#b4b4b4;"></div>
<div style="left:1218px;top:201px;width:1px;height:469px;background:rgba(150,150,150,.38);"></div>
<span style="left:1223.50px;top:181.00px;font-size:12px;line-height:16px;letter-spacing:-0.337px;color:#444;">7:00...</span>
<div style="left:1259px;top:176px;width:1px;height:24px;background:#b4b4b4;"></div>
<div style="left:1259px;top:201px;width:1px;height:469px;background:rgba(150,150,150,.38);"></div>
<span style="left:1264.50px;top:181.00px;font-size:12px;line-height:16px;letter-spacing:-0.337px;color:#444;">8:00...</span>
<div style="left:1300px;top:176px;width:1px;height:24px;background:#b4b4b4;"></div>
<div style="left:1300px;top:201px;width:1px;height:469px;background:rgba(150,150,150,.38);"></div>
<span style="left:1305.50px;top:181.00px;font-size:12px;line-height:16px;letter-spacing:-0.337px;color:#444;">9:00...</span>
<div style="left:1341px;top:176px;width:1px;height:24px;background:#b4b4b4;"></div>
<div style="left:1341px;top:201px;width:1px;height:469px;background:rgba(150,150,150,.38);"></div>
<span style="left:1346.50px;top:181.00px;font-size:12px;line-height:16px;letter-spacing:-0.337px;color:#444;">10:0...</span>
<div style="left:1382px;top:176px;width:1px;height:24px;background:#b4b4b4;"></div>
<div style="left:1382px;top:201px;width:1px;height:469px;background:rgba(150,150,150,.38);"></div>
<span style="left:1388.00px;top:181.00px;font-size:12px;line-height:16px;letter-spacing:-0.210px;color:#444;">11:0...</span>
<div style="left:424px;top:201px;width:1px;height:487px;background:#b4b4b4;"></div>
<div style="left:1408px;top:201px;width:16px;height:469px;background:#f0f0f0;"></div>
<div style="left:1408px;top:294px;width:16px;height:1px;background:#cfcfcf;"></div>
<div style="left:1408px;top:388px;width:16px;height:1px;background:#cfcfcf;"></div>
<div style="left:1408px;top:482px;width:16px;height:1px;background:#cfcfcf;"></div>
<div style="left:1408px;top:576px;width:16px;height:1px;background:#cfcfcf;"></div>
<div style="left:1425px;top:201px;width:15px;height:469px;background:#f0f0f0;"></div>
<div style="left:1425px;top:218px;width:15px;height:219px;background:#c1c1c1;"></div>
<div style="left:425px;top:670px;width:1015px;height:17px;background:#f0f0f0;"></div>
<div style="left:400px;top:670px;width:24px;height:17px;background:#ece9f8;"></div>
<div style="left:400px;top:670px;width:1040px;height:1px;background:#c9c9c9;"></div>
<div style="left:856px;top:671px;width:137px;height:16px;background:#c1c1c1;"></div>
<div style="left:425px;top:201px;width:61px;height:57.3px;background:#ffff99;"></div>
<div style="left:425px;top:201px;width:11.6px;height:57.3px;background:#e2df35;"></div>
<div style="left:425px;top:201px;width:61px;height:9px;background:#00008b;"></div>
<div style="left:441.2px;top:210px;width:41px;height:48.3px;overflow:hidden;">
<span style="left:0.00px;top:6.00px;font-size:13.5px;line-height:17px;letter-spacing:0.140px;color:#000;font-weight:bold;">Control Board</span>
<span style="left:0.50px;top:29.00px;font-size:13.5px;line-height:17px;letter-spacing:-0.181px;color:#222;">D75-CB01</span>
</div>
<div style="left:561px;top:389px;width:83px;height:57.3px;background:#d2b48c;"></div>
<div style="left:561px;top:389px;width:18.8px;height:57.3px;background:#c49a6c;"></div>
<div style="left:561px;top:389px;width:83px;height:9px;background:#00008b;"></div>
<div style="left:584.2px;top:398px;width:56.3px;height:48.3px;overflow:hidden;">
<span style="left:0.00px;top:6.00px;font-size:13.5px;line-height:17px;letter-spacing:0.140px;color:#000;font-weight:bold;">Control Board</span>
<span style="left:0.50px;top:29.00px;font-size:13.5px;line-height:17px;letter-spacing:-0.181px;color:#222;">D75-CB01</span>
</div>
<div style="left:775px;top:483px;width:35px;height:57.5px;background:#d2b48c;"></div>
<div style="left:775px;top:483px;width:6px;height:57.5px;background:#c49a6c;"></div>
<div style="left:775px;top:483px;width:35px;height:9px;background:#00008b;"></div>
<div style="left:785.3px;top:492px;width:20.6px;height:48.5px;overflow:hidden;">
<span style="left:0.00px;top:6.00px;font-size:13.5px;line-height:17px;letter-spacing:0.137px;color:#000;font-weight:bold;">Control</span>
<span style="left:0.50px;top:29.00px;font-size:13.5px;line-height:17px;letter-spacing:-0.184px;color:#222;">D75-CB</span>
</div>
<div style="left:775px;top:483px;width:35px;height:57.5px;border:1px solid #1f5fb0;box-sizing:border-box;"></div>
<div style="left:402px;top:694px;width:113px;height:23px;border:1px solid #b9b9b9;box-sizing:border-box;background:linear-gradient(#f3f3f3,#e6e6e6);"></div>
<span style="left:411.20px;top:698.00px;font-size:12px;line-height:16px;letter-spacing:-0.210px;color:#333;">Reserved Material</span>
<div style="left:399px;top:716px;width:1088px;height:201px;background:#fff;border:1px solid #a9a9a9;box-sizing:border-box;"></div>
<div style="left:514px;top:692px;width:109px;height:25px;background:#fff;border:1px solid #a9a9a9;box-sizing:border-box;border-bottom:none;"></div>
<span style="left:523.00px;top:698.00px;font-size:12px;line-height:16px;letter-spacing:-0.238px;color:#222;">Unavailable Parts</span>
<span style="left:412.00px;top:726.00px;font-size:12px;line-height:16px;letter-spacing:-0.089px;color:#222;font-weight:bold;">The reservation has been confirmed, all unavailable parts are now on a missing transport order.</span>
<div style="left:402px;top:750px;width:1082px;height:163px;background:#fff;border:1px solid #b5b5b5;box-sizing:border-box;"></div>
<div style="left:403px;top:773px;width:1080px;height:1px;background:#d0d0d0;"></div>
<div style="left:552px;top:752px;width:1px;height:21px;background:#d0d0d0;"></div>
<div style="left:802px;top:752px;width:1px;height:21px;background:#d0d0d0;"></div>
<div style="left:952px;top:752px;width:1px;height:21px;background:#d0d0d0;"></div>
<div style="left:1102px;top:752px;width:1px;height:21px;background:#d0d0d0;"></div>
<span style="left:407.50px;top:755.00px;font-size:12px;line-height:16px;letter-spacing:-0.002px;color:#333;">Part Number</span>
<span style="left:557.50px;top:755.00px;font-size:12px;line-height:16px;letter-spacing:0.043px;color:#333;">P/N Description</span>
<span style="left:807.50px;top:755.00px;font-size:12px;line-height:16px;letter-spacing:0.063px;color:#333;">Needed Quantity</span>
<span style="left:957.50px;top:755.00px;font-size:12px;line-height:16px;letter-spacing:-0.054px;color:#333;">Unit of Issue</span>
<span style="left:1107.50px;top:755.00px;font-size:12px;line-height:16px;letter-spacing:-0.337px;color:#333;">Status</span>
<svg style="left:538.5px;top:758.5px;" width="10" height="8" viewBox="0 0 10 8"><path d="M0.3 6 L4.9 1 L9.5 6 Z" fill="#555"/></svg>
<div style="left:399.5px;top:922px;width:79.5px;height:28px;background:#fff;border:1px solid #e6e6e6;box-sizing:border-box;"></div>
<span style="left:430.50px;top:929.00px;font-size:12.5px;line-height:16px;letter-spacing:-0.322px;color:#bdbdbd;">Confirm</span>
<div style="left:1195px;top:922px;width:97px;height:28px;background:#fff;border:1px solid #e6e6e6;box-sizing:border-box;"></div>
<span style="left:1225.00px;top:929.00px;font-size:12.5px;line-height:16px;letter-spacing:-0.130px;color:#bdbdbd;">Confirm All</span>
<div style="left:1305px;top:922px;width:81px;height:28px;background:#fff;border:1px solid #e6e6e6;box-sizing:border-box;"></div>
<span style="left:1336.00px;top:929.00px;font-size:12.5px;line-height:16px;letter-spacing:-0.396px;color:#bdbdbd;">Save All</span>
<div style="left:1399px;top:926px;width:1px;height:20px;background:#9a9a9a;"></div>
<div style="left:1413px;top:922px;width:73px;height:28px;background:#fff;border:1px solid #e6e6e6;box-sizing:border-box;"></div>
<span style="left:1444.00px;top:929.00px;font-size:12.5px;line-height:16px;letter-spacing:-0.485px;color:#bdbdbd;">Cancel</span>
<div style="left:368px;top:1px;width:44px;height:49px;background:#f8f8fa;"></div>
<svg style="left:226px;top:8px;" width="40" height="34" viewBox="0 0 40 34"><path d="M4.2 17 L19 7.6 L33.6 17" fill="none" stroke="#fff" stroke-width="3.2" stroke-linejoin="miter"/><rect x="25" y="5.7" width="5.2" height="7.5" fill="#fff"/><path d="M7.8 18.6 L19 11.6 L30.2 18.6 V30 H22 V21.5 a3 3 0 0 0 -6 0 V30 H7.8 Z" fill="#fff"/></svg>
<svg style="left:274px;top:8px;" width="40" height="34" viewBox="0 0 40 34"><rect x="4.1" y="3.9" width="6.6" height="5.6" fill="#fff"/><rect x="12.5" y="3.9" width="6.4" height="5.6" fill="#fff"/><rect x="20.5" y="3.9" width="6.6" height="5.6" fill="#fff"/><rect x="4.1" y="11.2" width="6.6" height="5" fill="#fff"/><rect x="12.5" y="11.2" width="6.4" height="5" fill="#fff"/><rect x="20.5" y="11.2" width="6.6" height="5" fill="#fff"/><rect x="4.1" y="17.8" width="6.6" height="5" fill="#fff"/><rect x="12.5" y="17.8" width="6.4" height="5" fill="#fff"/><rect x="20.5" y="17.8" width="6.6" height="5" fill="#fff"/><rect x="4.1" y="24.2" width="6.6" height="4.9" fill="#fff"/><rect x="12.5" y="24.2" width="6.4" height="4.9" fill="#fff"/><rect x="20.5" y="24.2" width="6.6" height="4.9" fill="#fff"/><path d="M14.2 28.6 L31.2 11.2" stroke="#1b2e3d" stroke-width="7" stroke-linecap="round"/><path d="M16.2 26.4 L30.2 12.2" stroke="#fff" stroke-width="4" stroke-linecap="butt"/><path d="M30.9 11.5 L32.1 10.3" stroke="#fff" stroke-width="4" stroke-linecap="round"/><path d="M13.6 29 L14.8 24.4 L18.2 27.8 Z" fill="#fff"/></svg>
<svg style="left:322px;top:6px;" width="36" height="38" viewBox="0 0 36 38"><path d="M9 9 a10 3.6 0 0 1 20 0 V29 a10 3.6 0 0 1 -20 0 Z" fill="#fff"/><path d="M9 17.8 a10 3.6 0 0 0 20 0" fill="none" stroke="#1b2e3d" stroke-width="1.4"/><path d="M9 23.6 a10 3.6 0 0 0 20 0" fill="none" stroke="#1b2e3d" stroke-width="1.4"/><path d="M5 8 C9 6.5 13 8 16 11.5 L19.8 7 L22.4 20.6 L9.4 17.6 L13.2 14.4 C11 11.5 8.5 11 5.4 11.2 Z" fill="#fff" stroke="#1b2e3d" stroke-width="1.3" stroke-linejoin="miter"/></svg>
<svg style="left:374px;top:9px;" width="32" height="32" viewBox="0 0 32 32"><circle cx="16" cy="16.4" r="14.5" fill="#1b2e3d"/><path d="M16 3.9 A12.5 12.5 0 0 1 16 28.9 Z" fill="#f8f8fa"/><path d="M4.9 16.4 L13 10.1 V13.7 H16 V19.1 H13 V22.7 Z" fill="#f8f8fa"/><path d="M27.1 16.4 L19 10.1 V13.7 H16 V19.1 H19 V22.7 Z" fill="#1b2e3d"/></svg>
<svg style="left:420px;top:8px;" width="36" height="34" viewBox="0 0 36 34"><rect x="9.3" y="2.3" width="24.2" height="21.9" rx="2" fill="#fff"/><rect x="11.9" y="7.6" width="19.1" height="14.2" fill="#1b2e3d"/><rect x="4.3" y="9.6" width="24.5" height="21.9" rx="2.2" fill="#fff" stroke="#1b2e3d" stroke-width="0.9"/><rect x="7" y="14.9" width="19" height="13.9" fill="#1b2e3d"/><rect x="18" y="16" width="6.9" height="11" fill="#fff"/><rect x="8.6" y="16.35" width="8.1" height="1.3" fill="#fff"/><rect x="8.6" y="19.55" width="8.1" height="1.3" fill="#fff"/><rect x="8.6" y="22.75" width="8.1" height="1.3" fill="#fff"/><rect x="8.6" y="25.950000000000003" width="8.1" height="1.3" fill="#fff"/><circle cx="24" cy="5" r="0.95" fill="#1b2e3d"/><circle cx="27.3" cy="5" r="0.95" fill="#1b2e3d"/><circle cx="30.6" cy="5" r="0.95" fill="#1b2e3d"/><circle cx="19.2" cy="12.2" r="0.95" fill="#1b2e3d"/><circle cx="22.5" cy="12.2" r="0.95" fill="#1b2e3d"/><circle cx="25.8" cy="12.2" r="0.95" fill="#1b2e3d"/></svg>
<svg style="left:471px;top:9px;" width="32" height="32" viewBox="0 0 32 32"><polygon points="14.58,1.87 17.42,1.87 18.07,5.81 20.32,6.54 23.16,3.74 25.45,5.40 23.66,8.97 25.06,10.89 29.00,10.29 29.88,12.98 26.33,14.82 26.33,17.18 29.88,19.02 29.00,21.71 25.06,21.11 23.66,23.03 25.45,26.60 23.16,28.26 20.32,25.46 18.07,26.19 17.42,30.13 14.58,30.13 13.93,26.19 11.68,25.46 8.84,28.26 6.55,26.60 8.34,23.03 6.94,21.11 3.00,21.71 2.12,19.02 5.67,17.18 5.67,14.82 2.12,12.98 3.00,10.29 6.94,10.89 8.34,8.97 6.55,5.40 8.84,3.74 11.68,6.54 13.93,5.81" fill="#fff" stroke="#fff" stroke-width="1.2" stroke-linejoin="round"/><circle cx="16" cy="16" r="5" fill="#1b2e3d"/></svg>
<svg style="left:1378px;top:10px;" width="34" height="32" viewBox="0 0 34 32"><path d="M4.6 29.7 C5 24.5 8 22.6 12.5 21 L14 19 L18 19 L19.5 21 C22 22 24 22.8 25.5 24.5 L25.5 29.7 Z" fill="#fff"/><ellipse cx="15.9" cy="11.6" rx="6.6" ry="8.8" fill="#fff"/><circle cx="24.5" cy="23.5" r="7.6" fill="#1b2e3d"/><circle cx="24.5" cy="23.5" r="6.6" fill="#fff"/><path d="M21.7 20.7 L27.3 26.3 M27.3 20.7 L21.7 26.3" stroke="#1b2e3d" stroke-width="2.1"/></svg>
<div style="left:1431px;top:34px;width:7px;height:2px;background:#e4ddd6;"></div>
<div style="left:1451px;top:29px;width:9px;height:7px;border:1px solid #e4ddd6;box-sizing:border-box;border-top-width:2px;"></div>
<svg style="left:1472px;top:28px;" width="9" height="9" viewBox="0 0 9 9"><path d="M0.8 1 L7.8 8 M7.8 1 L0.8 8" stroke="#e4ddd6" stroke-width="1.1"/></svg>
<svg style="left:27.8px;top:75px;" width="15" height="12" viewBox="0 0 15 12"><rect x="0" y="0" width="14.2" height="11.9" fill="#fff"/><rect x="0.9000000000000001" y="2.0" width="1.5" height="1.2" fill="#555"/><rect x="3.5" y="2.0" width="1.5" height="1.2" fill="#555"/><rect x="6.1" y="2.0" width="1.5" height="1.2" fill="#555"/><rect x="8.700000000000001" y="2.0" width="1.5" height="1.2" fill="#555"/><rect x="11.3" y="2.0" width="1.5" height="1.2" fill="#555"/><rect x="0.9000000000000001" y="4.6000000000000005" width="1.5" height="1.2" fill="#555"/><rect x="6.1" y="4.6000000000000005" width="1.5" height="1.2" fill="#555"/><rect x="11.3" y="4.6000000000000005" width="1.5" height="1.2" fill="#555"/><rect x="3.5" y="7.2" width="1.5" height="1.2" fill="#555"/><rect x="11.3" y="7.2" width="1.5" height="1.2" fill="#555"/><rect x="0.9000000000000001" y="9.6" width="1.5" height="1.2" fill="#555"/><rect x="3.5" y="9.6" width="1.5" height="1.2" fill="#555"/><rect x="6.1" y="9.6" width="1.5" height="1.2" fill="#555"/><rect x="8.700000000000001" y="9.6" width="1.5" height="1.2" fill="#555"/></svg>
<svg style="left:198px;top:72px;" width="16" height="18" viewBox="0 0 16 18"><rect x="2.4" y="3.4" width="10.2" height="12" fill="#fff" stroke="#111" stroke-width="1.5"/><rect x="5" y="2.4" width="5" height="2.4" fill="#111"/><circle cx="7.5" cy="2.2" r="1.3" fill="#fff" stroke="#111" stroke-width="0.9"/><path d="M4.6 9.2 h3.2 v-1.8 l3 2.6 l-3 2.6 v-1.8 h-3.2 Z" fill="#111"/></svg>
<svg style="left:245px;top:71px;" width="20" height="20" viewBox="0 0 20 20"><circle cx="8.7" cy="8.7" r="5.3" fill="none" stroke="#111" stroke-width="1.6"/><path d="M12.6 12.8 L16.8 17" stroke="#111" stroke-width="2.6" stroke-linecap="round"/></svg>
<svg style="left:282px;top:69.2px;" width="24" height="24" viewBox="0 0 24 24"><g transform="translate(12 12) scale(0.805)"><circle cx="0" cy="0" r="8.7" fill="#111"/><path d="M-4.2 -0.9 A4.2 4.2 0 0 1 2.9 -3.1" fill="none" stroke="#fff" stroke-width="2.1"/><path d="M1.6 -0.9 L5.5 -0.9 L5.5 -4.9 Z" fill="#fff"/><g transform="rotate(180)"><path d="M-4.2 -0.9 A4.2 4.2 0 0 1 2.9 -3.1" fill="none" stroke="#fff" stroke-width="2.1"/><path d="M1.6 -0.9 L5.5 -0.9 L5.5 -4.9 Z" fill="#fff"/></g></g></svg>
<svg style="left:410px;top:95.5px;" width="20" height="20" viewBox="0 0 20 20"><circle cx="10" cy="10" r="9" fill="#000"/><rect x="4.4" y="8.4" width="11.2" height="3.4" rx="0.6" fill="#fff"/></svg>
<svg style="left:784px;top:69px;" width="20" height="20" viewBox="0 0 20 20"><path d="M1.3 1.4 H18.4 L11.4 10.8 V17.5 H9 V10.8 Z" fill="#000"/></svg>
<svg style="left:824px;top:69.5px;" width="17" height="19" viewBox="0 0 17 19"><rect x="0.8" y="1.6" width="13.4" height="16" fill="#8a8a8a" stroke="#e8e8e8" stroke-width="1.1"/><rect x="3.6" y="5" width="8" height="1.1" fill="#d8d8d8"/><rect x="3.6" y="7.4" width="8" height="1.1" fill="#d8d8d8"/><rect x="3.6" y="9.8" width="8" height="1.1" fill="#d8d8d8"/><rect x="3.6" y="12.2" width="8" height="1.1" fill="#d8d8d8"/><rect x="3.6" y="14.6" width="8" height="1.1" fill="#d8d8d8"/><path d="M9.6 3.2 L11.8 5.6 L15.6 0.6" fill="none" stroke="#fff" stroke-width="1.5"/></svg>
<svg style="left:822.2px;top:99.2px;" width="20" height="18" viewBox="0 0 20 18"><rect x="0.2" y="0.2" width="17.4" height="14.5" fill="#000"/><rect x="0.70" y="2.90" width="2.4" height="2.4" fill="#fff"/><rect x="6.30" y="2.90" width="2.4" height="2.4" fill="#fff"/><rect x="11.90" y="2.90" width="2.4" height="2.4" fill="#fff"/><rect x="3.50" y="5.80" width="2.4" height="2.4" fill="#fff"/><rect x="9.10" y="5.80" width="2.4" height="2.4" fill="#fff"/><rect x="14.70" y="5.80" width="2.4" height="2.4" fill="#fff"/><rect x="0.70" y="8.70" width="2.4" height="2.4" fill="#fff"/><rect x="6.30" y="8.70" width="2.4" height="2.4" fill="#fff"/><rect x="11.90" y="8.70" width="2.4" height="2.4" fill="#fff"/><rect x="3.50" y="11.60" width="2.4" height="2.4" fill="#fff"/><rect x="9.10" y="11.60" width="2.4" height="2.4" fill="#fff"/><rect x="14.70" y="11.60" width="2.4" height="2.4" fill="#fff"/><rect x="2.20" y="0.9" width="1.3" height="0.9" fill="#bbb"/><rect x="5.40" y="0.9" width="1.3" height="0.9" fill="#bbb"/><rect x="8.60" y="0.9" width="1.3" height="0.9" fill="#bbb"/><rect x="11.80" y="0.9" width="1.3" height="0.9" fill="#bbb"/><rect x="15.00" y="0.9" width="1.3" height="0.9" fill="#bbb"/><circle cx="14.3" cy="12.6" r="4.9" fill="#fff"/><circle cx="14.3" cy="12.6" r="3.7" fill="#fff" stroke="#000" stroke-width="1.3"/><path d="M14.3 10.4 V12.8 H16.2" fill="none" stroke="#000" stroke-width="1"/></svg>
<svg style="left:970px;top:66.5px;" width="24" height="24" viewBox="0 0 24 24"><circle cx="11" cy="11" r="8.2" fill="#fff" stroke="#111" stroke-width="1.9"/><path d="M11 5.4 V11.2 H16.2" fill="none" stroke="#111" stroke-width="1.5"/><rect x="10.6" y="3.3000000000000007" width="0.8" height="1.6" fill="#111" transform="rotate(0 11 11)"/><rect x="10.6" y="3.3000000000000007" width="0.8" height="1.6" fill="#111" transform="rotate(90 11 11)"/><rect x="10.6" y="3.3000000000000007" width="0.8" height="1.6" fill="#111" transform="rotate(180 11 11)"/><rect x="10.6" y="3.3000000000000007" width="0.8" height="1.6" fill="#111" transform="rotate(270 11 11)"/></svg>
<svg style="left:972px;top:94.5px;" width="22" height="21" viewBox="0 0 22 21"><rect x="0.6" y="2.6" width="16.8" height="13.8" fill="#fff" stroke="#111" stroke-width="1.3"/><rect x="0.6" y="2.6" width="16.8" height="3.2" fill="#111"/><rect x="4.42" y="0" width="1.6" height="4.2" fill="#111"/><rect x="11.98" y="0" width="1.6" height="4.2" fill="#111"/><rect x="4.30" y="5.800000000000001" width="1" height="10.599999999999998" fill="#111"/><rect x="8.50" y="5.800000000000001" width="1" height="10.599999999999998" fill="#111"/><rect x="12.70" y="5.800000000000001" width="1" height="10.599999999999998" fill="#111"/><rect x="0.6" y="8.83" width="16.8" height="1" fill="#111"/><rect x="0.6" y="12.37" width="16.8" height="1" fill="#111"/></svg>
<svg style="left:1085.5px;top:66.5px;" width="24" height="24" viewBox="0 0 24 24"><circle cx="11" cy="11" r="8.2" fill="#fff" stroke="#111" stroke-width="1.9"/><path d="M11 5.4 V11.2 H16.2" fill="none" stroke="#111" stroke-width="1.5"/><rect x="10.6" y="3.3000000000000007" width="0.8" height="1.6" fill="#111" transform="rotate(0 11 11)"/><rect x="10.6" y="3.3000000000000007" width="0.8" height="1.6" fill="#111" transform="rotate(90 11 11)"/><rect x="10.6" y="3.3000000000000007" width="0.8" height="1.6" fill="#111" transform="rotate(180 11 11)"/><rect x="10.6" y="3.3000000000000007" width="0.8" height="1.6" fill="#111" transform="rotate(270 11 11)"/><circle cx="16.6" cy="16.5" r="5" fill="#fff"/><circle cx="16.6" cy="16.5" r="3.9" fill="#111"/><path d="M14.2 15.7 h2.2 v-1.5 l2.6 2.3 l-2.6 2.3 v-1.5 h-2.2 Z" fill="#fff"/></svg>
<svg style="left:1087px;top:94.5px;" width="22" height="21" viewBox="0 0 22 21"><rect x="0.6" y="2.6" width="16.8" height="13.8" fill="#fff" stroke="#111" stroke-width="1.3"/><rect x="0.6" y="2.6" width="16.8" height="3.2" fill="#111"/><rect x="4.42" y="0" width="1.6" height="4.2" fill="#111"/><rect x="11.98" y="0" width="1.6" height="4.2" fill="#111"/><rect x="4.30" y="5.800000000000001" width="1" height="10.599999999999998" fill="#111"/><rect x="8.50" y="5.800000000000001" width="1" height="10.599999999999998" fill="#111"/><rect x="12.70" y="5.800000000000001" width="1" height="10.599999999999998" fill="#111"/><rect x="0.6" y="8.83" width="16.8" height="1" fill="#111"/><rect x="0.6" y="12.37" width="16.8" height="1" fill="#111"/><circle cx="15.8" cy="13.4" r="5" fill="#fff"/><circle cx="15.8" cy="13.4" r="3.9" fill="#111"/><path d="M13.4 12.6 h2.2 v-1.5 l2.6 2.3 l-2.6 2.3 v-1.5 h-2.2 Z" fill="#fff"/></svg>
<svg style="left:1202px;top:68.5px;" width="22" height="21" viewBox="0 0 22 21"><rect x="0.6" y="2.6" width="16.8" height="13.8" fill="#fff" stroke="#111" stroke-width="1.3"/><rect x="0.6" y="2.6" width="16.8" height="3.2" fill="#111"/><rect x="4.42" y="0" width="1.6" height="4.2" fill="#111"/><rect x="11.98" y="0" width="1.6" height="4.2" fill="#111"/></svg>
<svg style="left:1202px;top:94.5px;" width="22" height="21" viewBox="0 0 22 21"><rect x="0.6" y="2.6" width="16.8" height="13.8" fill="#fff" stroke="#111" stroke-width="1.3"/><rect x="0.6" y="2.6" width="16.8" height="3.2" fill="#111"/><rect x="4.42" y="0" width="1.6" height="4.2" fill="#111"/><rect x="11.98" y="0" width="1.6" height="4.2" fill="#111"/><rect x="2.90" y="5.800000000000001" width="1" height="10.599999999999998" fill="#111"/><rect x="5.70" y="5.800000000000001" width="1" height="10.599999999999998" fill="#111"/><rect x="8.50" y="5.800000000000001" width="1" height="10.599999999999998" fill="#111"/><rect x="11.30" y="5.800000000000001" width="1" height="10.599999999999998" fill="#111"/><rect x="14.10" y="5.800000000000001" width="1" height="10.599999999999998" fill="#111"/><rect x="0.6" y="7.95" width="16.8" height="1" fill="#111"/><rect x="0.6" y="10.60" width="16.8" height="1" fill="#111"/><rect x="0.6" y="13.25" width="16.8" height="1" fill="#111"/></svg>
<svg style="left:1317.5px;top:68.5px;" width="22" height="21" viewBox="0 0 22 21"><rect x="0.6" y="2.6" width="16.8" height="13.8" fill="#fff" stroke="#111" stroke-width="1.3"/><rect x="0.6" y="2.6" width="16.8" height="3.2" fill="#111"/><rect x="4.42" y="0" width="1.6" height="4.2" fill="#111"/><rect x="11.98" y="0" width="1.6" height="4.2" fill="#111"/><circle cx="15.8" cy="13.4" r="5" fill="#fff"/><circle cx="15.8" cy="13.4" r="3.9" fill="#111"/><path d="M13.4 12.6 h2.2 v-1.5 l2.6 2.3 l-2.6 2.3 v-1.5 h-2.2 Z" fill="#fff"/></svg>
<svg style="left:1317.5px;top:94.5px;" width="22" height="21" viewBox="0 0 22 21"><rect x="0.6" y="2.6" width="16.8" height="13.8" fill="#fff" stroke="#111" stroke-width="1.3"/><rect x="0.6" y="2.6" width="16.8" height="3.2" fill="#111"/><rect x="4.42" y="0" width="1.6" height="4.2" fill="#111"/><rect x="11.98" y="0" width="1.6" height="4.2" fill="#111"/><rect x="2.90" y="5.800000000000001" width="1" height="10.599999999999998" fill="#111"/><rect x="5.70" y="5.800000000000001" width="1" height="10.599999999999998" fill="#111"/><rect x="8.50" y="5.800000000000001" width="1" height="10.599999999999998" fill="#111"/><rect x="11.30" y="5.800000000000001" width="1" height="10.599999999999998" fill="#111"/><rect x="14.10" y="5.800000000000001" width="1" height="10.599999999999998" fill="#111"/><rect x="0.6" y="7.95" width="16.8" height="1" fill="#111"/><rect x="0.6" y="10.60" width="16.8" height="1" fill="#111"/><rect x="0.6" y="13.25" width="16.8" height="1" fill="#111"/><circle cx="15.8" cy="13.4" r="5" fill="#fff"/><circle cx="15.8" cy="13.4" r="3.9" fill="#111"/><path d="M13.4 12.6 h2.2 v-1.5 l2.6 2.3 l-2.6 2.3 v-1.5 h-2.2 Z" fill="#fff"/></svg>
<svg style="left:1453.3px;top:94.5px;" width="24" height="24" viewBox="0 0 24 24"><g transform="translate(12 12) scale(1.011)"><circle cx="0" cy="0" r="8.7" fill="#111"/><path d="M-4.2 -0.9 A4.2 4.2 0 0 1 2.9 -3.1" fill="none" stroke="#fff" stroke-width="2.1"/><path d="M1.6 -0.9 L5.5 -0.9 L5.5 -4.9 Z" fill="#fff"/><g transform="rotate(180)"><path d="M-4.2 -0.9 A4.2 4.2 0 0 1 2.9 -3.1" fill="none" stroke="#fff" stroke-width="2.1"/><path d="M1.6 -0.9 L5.5 -0.9 L5.5 -4.9 Z" fill="#fff"/></g></g></svg>
<svg style="left:1454px;top:137.5px;" width="24" height="24" viewBox="0 0 24 24"><circle cx="11" cy="11" r="8.4" fill="#fff" stroke="#111" stroke-width="1.9"/><path d="M11 5.4 V11.2 H16.2" fill="none" stroke="#111" stroke-width="1.5"/><rect x="10.6" y="3.0999999999999996" width="0.8" height="1.6" fill="#111" transform="rotate(0 11 11)"/><rect x="10.6" y="3.0999999999999996" width="0.8" height="1.6" fill="#111" transform="rotate(90 11 11)"/><rect x="10.6" y="3.0999999999999996" width="0.8" height="1.6" fill="#111" transform="rotate(180 11 11)"/><rect x="10.6" y="3.0999999999999996" width="0.8" height="1.6" fill="#111" transform="rotate(270 11 11)"/></svg>
<svg style="left:1456.5px;top:176px;" width="22" height="21" viewBox="0 0 22 21"><rect x="0.6" y="2.6" width="16.8" height="13.8" fill="#6b6b6b" stroke="#fff" stroke-width="1.3"/><rect x="0.6" y="2.6" width="16.8" height="3.2" fill="#fff"/><rect x="4.42" y="0" width="1.6" height="4.2" fill="#fff"/><rect x="11.98" y="0" width="1.6" height="4.2" fill="#fff"/></svg>
<svg style="left:1456.5px;top:212px;" width="22" height="21" viewBox="0 0 22 21"><rect x="0.6" y="2.6" width="16.8" height="13.8" fill="#fff" stroke="#111" stroke-width="1.3"/><rect x="0.6" y="2.6" width="16.8" height="3.2" fill="#111"/><rect x="4.42" y="0" width="1.6" height="4.2" fill="#111"/><rect x="11.98" y="0" width="1.6" height="4.2" fill="#111"/><rect x="4.30" y="5.800000000000001" width="1" height="10.599999999999998" fill="#111"/><rect x="8.50" y="5.800000000000001" width="1" height="10.599999999999998" fill="#111"/><rect x="12.70" y="5.800000000000001" width="1" height="10.599999999999998" fill="#111"/><rect x="0.6" y="8.83" width="16.8" height="1" fill="#111"/><rect x="0.6" y="12.37" width="16.8" height="1" fill="#111"/></svg>
<svg style="left:1456.5px;top:248px;" width="22" height="21" viewBox="0 0 22 21"><rect x="0.6" y="2.6" width="16.8" height="13.8" fill="#fff" stroke="#111" stroke-width="1.3"/><rect x="0.6" y="2.6" width="16.8" height="3.2" fill="#111"/><rect x="4.42" y="0" width="1.6" height="4.2" fill="#111"/><rect x="11.98" y="0" width="1.6" height="4.2" fill="#111"/><rect x="2.90" y="5.800000000000001" width="1" height="10.599999999999998" fill="#111"/><rect x="5.70" y="5.800000000000001" width="1" height="10.599999999999998" fill="#111"/><rect x="8.50" y="5.800000000000001" width="1" height="10.599999999999998" fill="#111"/><rect x="11.30" y="5.800000000000001" width="1" height="10.599999999999998" fill="#111"/><rect x="14.10" y="5.800000000000001" width="1" height="10.599999999999998" fill="#111"/><rect x="0.6" y="7.95" width="16.8" height="1" fill="#111"/><rect x="0.6" y="10.60" width="16.8" height="1" fill="#111"/><rect x="0.6" y="13.25" width="16.8" height="1" fill="#111"/></svg>
<svg style="left:40.8px;top:134.3px;" width="13" height="15" viewBox="0 0 13 15"><path d="M0.6 0.6 H8.2 L11.6 4 V14.2 H0.6 Z" fill="#fff"/><path d="M8.2 0.6 V4 H11.6" fill="#bbb"/><rect x="2.4" y="5.4" width="7.2" height="0.9" fill="#b5b5b5"/><rect x="2.4" y="7.4" width="7.2" height="0.9" fill="#b5b5b5"/><rect x="2.4" y="9.4" width="7.2" height="0.9" fill="#b5b5b5"/><rect x="2.4" y="11.4" width="7.2" height="0.9" fill="#b5b5b5"/></svg>
<svg style="left:146px;top:134px;" width="16" height="16" viewBox="0 0 16 16"><rect x="0.7" y="3" width="13.8" height="11.4" fill="#6b6b6b" stroke="#fff" stroke-width="1.3"/><rect x="0.7" y="3" width="13.8" height="2.2" fill="#fff"/><rect x="3.7" y="0" width="1.4" height="4" fill="#fff"/><rect x="10.1" y="0" width="1.4" height="4" fill="#fff"/><path d="M3.6 9.2 L6.6 12 L12.2 5.8" fill="none" stroke="#fff" stroke-width="2"/></svg>
<svg style="left:336.8px;top:134.4px;" width="16" height="16" viewBox="0 0 16 16"><rect x="0.7" y="3" width="13.8" height="11.4" fill="#6b6b6b" stroke="#fff" stroke-width="1.3"/><rect x="0.7" y="3" width="13.8" height="2.2" fill="#fff"/><rect x="3.7" y="0" width="1.4" height="4" fill="#fff"/><rect x="10.1" y="0" width="1.4" height="4" fill="#fff"/><path d="M3.6 9.2 L6.6 12 L12.2 5.8" fill="none" stroke="#fff" stroke-width="2"/></svg>
<svg style="left:234px;top:133.5px;" width="17" height="17" viewBox="0 0 17 17"><circle cx="8.5" cy="8.5" r="7.4" fill="#000"/><path d="M8.5 4.4 V12.6 M4.4 8.5 H12.6" stroke="#fff" stroke-width="2.6"/></svg>
<svg style="left:267px;top:133px;" width="19" height="19" viewBox="0 0 19 19"><g transform="rotate(-42 9.5 9.5)" fill="none" stroke="#111" stroke-width="2.2"><rect x="7.1" y="1.8" width="4.8" height="7.6" rx="2.4"/><rect x="7.1" y="9.6" width="4.8" height="7.6" rx="2.4"/></g></svg>
<svg style="left:303px;top:136px;" width="17" height="16" viewBox="0 0 17 16"><rect x="0.5" y="0.5" width="14" height="11.6" fill="#fff" stroke="#111" stroke-width="1"/><rect x="0.5" y="0.5" width="14" height="2.2" fill="#111"/><rect x="0.5" y="4.7" width="14" height="0.9" fill="#111"/><rect x="0.5" y="6.9" width="14" height="0.9" fill="#111"/><rect x="0.5" y="9.1" width="14" height="0.9" fill="#111"/><rect x="4.4" y="2" width="0.9" height="10" fill="#111"/><rect x="1.2" y="3.4" width="2.6" height="0.9" fill="#111"/><rect x="1.2" y="5.6" width="2.6" height="0.9" fill="#111"/><rect x="1.2" y="7.8" width="2.6" height="0.9" fill="#111"/><rect x="1.2" y="10" width="2.6" height="0.9" fill="#111"/><rect x="9.2" y="2" width="0.9" height="10" fill="#111"/><circle cx="11.6" cy="10.4" r="5" fill="#fff"/><polygon points="15.81,9.55 15.81,11.25 14.54,11.38 14.37,11.79 15.18,12.78 13.98,13.98 12.99,13.17 12.58,13.34 12.45,14.61 10.75,14.61 10.62,13.34 10.21,13.17 9.22,13.98 8.02,12.78 8.83,11.79 8.66,11.38 7.39,11.25 7.39,9.55 8.66,9.42 8.83,9.01 8.02,8.02 9.22,6.82 10.21,7.63 10.62,7.46 10.75,6.19 12.45,6.19 12.58,7.46 12.99,7.63 13.98,6.82 15.18,8.02 14.37,9.01 14.54,9.42" fill="#111"/><circle cx="11.6" cy="10.4" r="1.5" fill="#fff"/></svg>
<svg style="left:371px;top:134.5px;" width="14" height="14" viewBox="0 0 14 14"><g fill="#cfcfcf"><ellipse cx="8.6" cy="3.6" rx="2.5" ry="3.1"/><path d="M3.6 12.4 C3.6 8.6 6 7.6 8.6 7.6 S13.4 8.6 13.4 12.4 Z"/></g><g fill="#c2c2c2"><ellipse cx="5.4" cy="4.6" rx="2.6" ry="3.2"/><path d="M0.4 13.2 C0.4 9.4 2.8 8.4 5.4 8.4 S10.4 9.4 10.4 13.2 Z"/></g></svg>
<svg style="left:41px;top:892.8px;" width="14" height="13" viewBox="0 0 14 13"><rect x="0" y="0" width="13.4" height="12.6" rx="1.6" fill="#000"/><rect x="1.8" y="3" width="1.5" height="6.6" fill="#fff"/><path d="M7.4 3 V9.6 L3.4 6.3 Z M11.6 3 V9.6 L7.6 6.3 Z" fill="#fff"/></svg>
<svg style="left:75.2px;top:892.8px;" width="14" height="13" viewBox="0 0 14 13"><rect x="0" y="0" width="13.4" height="12.6" rx="1.6" fill="#000"/><rect x="3.4" y="2.6" width="1.9" height="7.4" fill="#fff"/><path d="M10 2.6 V10 L5.4 6.3 Z" fill="#fff"/></svg>
<svg style="left:178.8px;top:892.8px;" width="14" height="13" viewBox="0 0 14 13"><rect x="0" y="0" width="13.4" height="12.6" rx="1.6" fill="#000"/><rect x="8.1" y="2.6" width="1.9" height="7.4" fill="#fff"/><path d="M3.4 2.6 V10 L8 6.3 Z" fill="#fff"/></svg>
<svg style="left:212.8px;top:892.8px;" width="14" height="13" viewBox="0 0 14 13"><rect x="0" y="0" width="13.4" height="12.6" rx="1.6" fill="#000"/><rect x="10.1" y="3" width="1.5" height="6.6" fill="#fff"/><path d="M6 3 V9.6 L10 6.3 Z M1.8 3 V9.6 L5.8 6.3 Z" fill="#fff"/></svg>
<svg style="left:370px;top:894px;" width="10" height="8" viewBox="0 0 10 8"><path d="M1.6 1.8 L5 5.4 L8.4 1.8" fill="none" stroke="#444" stroke-width="1.5"/></svg>
<svg style="left:34.6px;top:928.4px;" width="11" height="16" viewBox="0 0 11 16"><path d="M0.4 0.4 H10 V2 H0.4 Z M0.4 13 H10 V14.8 H0.4 Z" fill="#111"/><path d="M1.6 2 H8.8 C8.8 5 6.4 6.4 6.2 7.6 C6.4 8.8 8.8 10.2 8.8 13 H1.6 C1.6 10.2 4 8.8 4.2 7.6 C4 6.4 1.6 5 1.6 2 Z" fill="#111"/><path d="M3 3.2 H7.4 C7 4.6 5.6 5.2 5.2 6.4 C4.8 5.2 3.4 4.6 3 3.2 Z" fill="#fff"/></svg>
<svg style="left:360px;top:925px;" width="24" height="24" viewBox="0 0 24 24"><circle cx="11.3" cy="11" r="9.6" fill="#fff" stroke="#c6c6c6" stroke-width="1.5"/><path d="M11.3 17.4 V5.4 M6.4 10.2 L11.3 5 L16.2 10.2" fill="none" stroke="#c6c6c6" stroke-width="1.6"/></svg>
<svg style="left:429px;top:127.5px;" width="22" height="22" viewBox="0 0 22 22"><circle cx="11" cy="11" r="9" fill="#000"/><g transform="translate(11 11) scale(1 1)"><path d="M-5.6 0 L-0.2 -5.3 V-2.2 H4.6 V2.2 H-0.2 V5.3 Z" fill="#fff"/></g></svg>
<svg style="left:1399px;top:127.5px;" width="22" height="22" viewBox="0 0 22 22"><circle cx="11" cy="11" r="9" fill="#000"/><g transform="translate(11 11) scale(-1 1)"><path d="M-5.6 0 L-0.2 -5.3 V-2.2 H4.6 V2.2 H-0.2 V5.3 Z" fill="#fff"/></g></svg>
<svg style="left:1427px;top:205px;" width="12" height="10" viewBox="0 0 12 10"><path d="M2 7.4 L6 3.2 L10 7.4" fill="none" stroke="#555" stroke-width="1.6"/></svg>
<svg style="left:428px;top:674px;" width="10" height="10" viewBox="0 0 10 10"><path d="M7 1.4 L3 5 L7 8.6" fill="none" stroke="#555" stroke-width="1.6"/></svg>
<svg style="left:1411px;top:674.5px;" width="10" height="10" viewBox="0 0 10 10"><path d="M3 1.4 L7 5 L3 8.6" fill="none" stroke="#b9b9b9" stroke-width="1.5"/></svg>
<svg style="left:1410px;top:206px;" width="12" height="10" viewBox="0 0 12 10"><path d="M2.4 7 L6 3.4 L9.6 7" fill="none" stroke="#dcdcdc" stroke-width="1.3"/></svg>
<svg style="left:1410px;top:281px;" width="12" height="10" viewBox="0 0 12 10"><path d="M2.4 3 L6 6.6 L9.6 3" fill="none" stroke="#dcdcdc" stroke-width="1.3"/></svg>
<svg style="left:1410px;top:300px;" width="12" height="10" viewBox="0 0 12 10"><path d="M2.4 7 L6 3.4 L9.6 7" fill="none" stroke="#dcdcdc" stroke-width="1.3"/></svg>
<svg style="left:1410px;top:375px;" width="12" height="10" viewBox="0 0 12 10"><path d="M2.4 3 L6 6.6 L9.6 3" fill="none" stroke="#dcdcdc" stroke-width="1.3"/></svg>
<svg style="left:1410px;top:394px;" width="12" height="10" viewBox="0 0 12 10"><path d="M2.4 7 L6 3.4 L9.6 7" fill="none" stroke="#dcdcdc" stroke-width="1.3"/></svg>
<svg style="left:1410px;top:469px;" width="12" height="10" viewBox="0 0 12 10"><path d="M2.4 3 L6 6.6 L9.6 3" fill="none" stroke="#dcdcdc" stroke-width="1.3"/></svg>
<svg style="left:1410px;top:488px;" width="12" height="10" viewBox="0 0 12 10"><path d="M2.4 7 L6 3.4 L9.6 7" fill="none" stroke="#dcdcdc" stroke-width="1.3"/></svg>
<svg style="left:1410px;top:563px;" width="12" height="10" viewBox="0 0 12 10"><path d="M2.4 3 L6 6.6 L9.6 3" fill="none" stroke="#dcdcdc" stroke-width="1.3"/></svg>
<svg style="left:1410px;top:582px;" width="12" height="10" viewBox="0 0 12 10"><path d="M2.4 7 L6 3.4 L9.6 7" fill="none" stroke="#dcdcdc" stroke-width="1.3"/></svg>
<svg style="left:1410px;top:657px;" width="12" height="10" viewBox="0 0 12 10"><path d="M2.4 3 L6 6.6 L9.6 3" fill="none" stroke="#dcdcdc" stroke-width="1.3"/></svg>
<svg style="left:406px;top:927px;" width="20" height="18" viewBox="0 0 20 18"><path d="M1.6 9 L4.6 6.2 L7.6 9.4 L15.6 2 L18.2 4.6 L7.6 15.8 Z" fill="#c4c4c4"/></svg>
<svg style="left:1201.6px;top:927px;" width="20" height="18" viewBox="0 0 20 18"><path d="M1.6 9 L4.6 6.2 L7.6 9.4 L15.6 2 L18.2 4.6 L7.6 15.8 Z" fill="#c4c4c4"/></svg>
<svg style="left:1314px;top:927.5px;" width="16" height="16" viewBox="0 0 16 16"><path d="M0.6 0.6 H12.4 L15.4 3.6 V15.4 H0.6 Z" fill="#c4c4c4"/><rect x="3.6" y="0.6" width="7.6" height="5.4" fill="#fff"/><rect x="8.4" y="1.4" width="1.8" height="3.6" fill="#c4c4c4"/><rect x="3" y="9" width="10" height="6.4" fill="#fff"/></svg>
<svg style="left:1421px;top:926.5px;" width="19" height="19" viewBox="0 0 19 19"><circle cx="9.5" cy="9.5" r="8.8" fill="#c4c4c4"/><path d="M5 14 L14 5" stroke="#fff" stroke-width="2.8"/></svg>
<svg style="left:1451.8px;top:722.3px;" width="24" height="24" viewBox="0 0 24 24"><g transform="translate(12 12) scale(0.793)"><circle cx="0" cy="0" r="8.7" fill="#c6c6c6"/><path d="M-4.2 -0.9 A4.2 4.2 0 0 1 2.9 -3.1" fill="none" stroke="#fff" stroke-width="2.1"/><path d="M1.6 -0.9 L5.5 -0.9 L5.5 -4.9 Z" fill="#fff"/><g transform="rotate(180)"><path d="M-4.2 -0.9 A4.2 4.2 0 0 1 2.9 -3.1" fill="none" stroke="#fff" stroke-width="2.1"/><path d="M1.6 -0.9 L5.5 -0.9 L5.5 -4.9 Z" fill="#fff"/></g></g></svg>
<div style="left:1065px;top:325px;width:422px;height:363px;background:rgba(222,222,222,0.74);border:1px solid #9b9b9b;box-sizing:border-box;border-right-color:rgba(190,190,190,.5);border-bottom-color:rgba(190,190,190,.5);"></div>
<span style="left:1081.50px;top:337.00px;font-size:18.5px;line-height:23px;letter-spacing:-0.799px;color:#2e2e2e;-webkit-text-stroke:0.45px #e3e4e1;">Color Legend</span>
<div style="left:1279px;top:336px;width:197px;height:97px;border:1px solid #6f6f6f;box-sizing:border-box;"></div>
<div style="left:1256px;top:432px;width:24px;height:1px;background:#6f6f6f;"></div>
<div style="left:1279px;top:481px;width:197px;height:166px;border:1px solid #6f6f6f;box-sizing:border-box;"></div>
<div style="left:1256px;top:481px;width:24px;height:1px;background:#6f6f6f;"></div>
<div style="left:1285px;top:344px;width:16px;height:16px;background:#00008b;"></div>
<span style="left:1311.00px;top:344.00px;font-size:13px;line-height:17px;letter-spacing:-0.101px;color:#2e2e2e;">Planned</span>
<div style="left:1285px;top:377px;width:16px;height:16px;background:#006400;"></div>
<span style="left:1311.00px;top:377.00px;font-size:13px;line-height:17px;letter-spacing:0.275px;color:#2e2e2e;">On-Time</span>
<div style="left:1285px;top:410px;width:16px;height:16px;background:#8b0000;"></div>
<span style="left:1311.00px;top:410.00px;font-size:13px;line-height:17px;letter-spacing:0.020px;color:#2e2e2e;">Overage</span>
<div style="left:1285px;top:489px;width:16px;height:16px;background:#d2b48c;"></div>
<span style="left:1311.00px;top:489.00px;font-size:13px;line-height:17px;letter-spacing:-0.160px;color:#2e2e2e;">Scheduled</span>
<div style="left:1285px;top:523px;width:16px;height:16px;background:#ffff99;"></div>
<span style="left:1311.00px;top:523.00px;font-size:13px;line-height:17px;letter-spacing:-0.026px;color:#2e2e2e;">Scheduled w/ Missing Parts</span>
<div style="left:1285px;top:556px;width:16px;height:16px;background:#c0c0c0;"></div>
<span style="left:1311.00px;top:556.00px;font-size:13px;line-height:17px;letter-spacing:-0.101px;color:#2e2e2e;">Pending</span>
<div style="left:1285px;top:590px;width:16px;height:16px;background:#9acd32;"></div>
<span style="left:1311.00px;top:590.00px;font-size:13px;line-height:17px;letter-spacing:0.237px;color:#2e2e2e;">Completed</span>
<div style="left:1285px;top:623px;width:16px;height:16px;background:#ff9f96;"></div>
<span style="left:1311.00px;top:623.00px;font-size:13px;line-height:17px;letter-spacing:0.037px;color:#2e2e2e;">Scheduling Conflict</span>
<div style="left:1076px;top:427px;width:180px;height:60px;background:#d2b48c;"></div>
<div style="left:1076px;top:427px;width:15px;height:60px;background:#c49a6c;"></div>
<div style="left:1076px;top:427px;width:180px;height:10px;background:#00008b;"></div>
<span style="left:1092.00px;top:438.00px;font-size:12px;line-height:16px;letter-spacing:0.076px;color:#111;font-weight:bold;">14306161</span>
<div style="left:1084px;top:487px;width:1px;height:95px;background:#555;"></div>
<div style="left:1076px;top:581px;width:78px;height:31px;border:1px solid #666;box-sizing:border-box;"></div>
<span style="left:1082.00px;top:589.00px;font-size:13px;line-height:17px;letter-spacing:0.024px;color:#333;">Setup Time</span>
<div style="left:1081px;top:623px;width:16px;height:16px;background:#5c2b2b;"></div>
<span style="left:1107.00px;top:623.00px;font-size:13px;line-height:17px;letter-spacing:0.049px;color:#2e2e2e;">Scheduled Down Time</span>
<div style="left:1449px;top:661px;width:32px;height:26px;background:#6b6b6b;"></div>
<svg style="left:1456px;top:668px;" width="18" height="12" viewBox="0 0 18 12"><rect x="1" y="1.5" width="16" height="8.5" rx="1.5" fill="#fff"/><rect x="8.5" y="3.5" width="6.5" height="4.5" fill="#6b6b6b"/></svg>
<svg style="left:1427px;top:546px;" width="10" height="10" viewBox="0 0 10 10"><rect x="1.5" y="0" width="7" height="1" fill="#c9c9c9"/><path d="M1.5 5 L5 1.5 L8.5 5 Z M1.5 9 L5 5.5 L8.5 9 Z" fill="#c9c9c9"/></svg>
<svg style="left:1427px;top:562px;" width="10" height="10" viewBox="0 0 10 10"><path d="M1.5 4.5 L5 1 L8.5 4.5 Z M1.5 8.5 L5 5 L8.5 8.5 Z" fill="#c9c9c9"/></svg>
<svg style="left:1427px;top:578px;" width="10" height="10" viewBox="0 0 10 10"><path d="M1.5 6 L5 2.5 L8.5 6 Z" fill="#c9c9c9"/></svg>
<svg style="left:1427px;top:594px;" width="10" height="10" viewBox="0 0 10 10"><path d="M1.5 3 L5 6.5 L8.5 3 Z" fill="#c9c9c9"/></svg>
<svg style="left:1427px;top:610px;" width="10" height="10" viewBox="0 0 10 10"><path d="M1.5 1 L5 4.5 L8.5 1 Z M1.5 5 L5 8.5 L8.5 5 Z" fill="#c9c9c9"/></svg>
<svg style="left:1427px;top:626px;" width="10" height="10" viewBox="0 0 10 10"><rect x="1.5" y="8.5" width="7" height="1" fill="#c9c9c9"/><path d="M1.5 0.5 L5 4 L8.5 0.5 Z M1.5 4.5 L5 8 L8.5 4.5 Z" fill="#c9c9c9"/></svg>
<svg style="left:1427px;top:642px;" width="10" height="10" viewBox="0 0 10 10"><path d="M5 0.5 V9 M1 4.8 H9" stroke="#c9c9c9" stroke-width="1.2"/></svg>
<svg style="left:1427px;top:657px;" width="10" height="10" viewBox="0 0 10 10"><path d="M5 1.5 V8" stroke="#c9c9c9" stroke-width="1.4"/></svg>
<div style="left:1057px;top:318px;width:433.5px;height:376.5px;border:3px solid #ec1c24;box-sizing:border-box;"></div>
</body></html>
